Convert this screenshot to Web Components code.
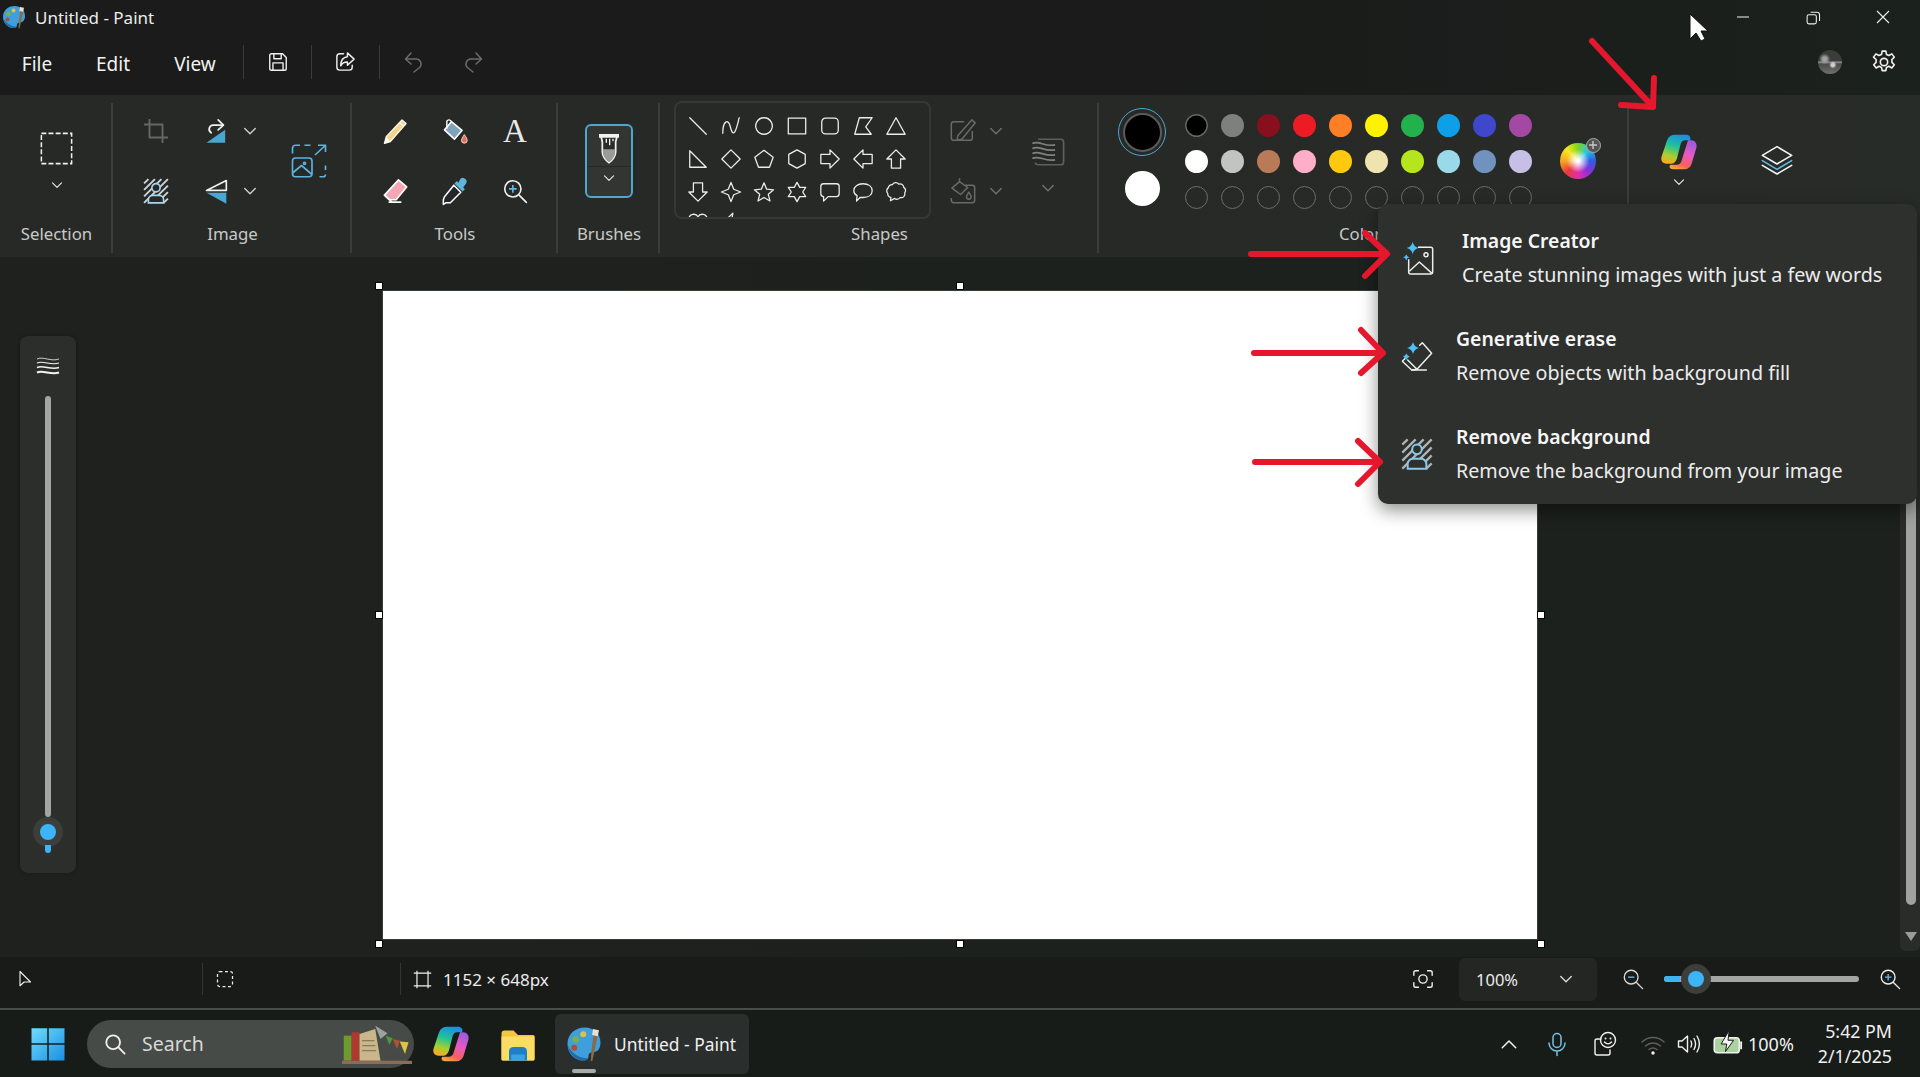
<!DOCTYPE html>
<html lang="en">
<head>
<meta charset="utf-8">
<title>Untitled - Paint</title>
<style>
  html, body { margin: 0; background: #1c211d; }
  body { width: 1920px; height: 1077px; overflow: hidden; font-family: "Noto Sans", "Open Sans", sans-serif; color: #f2f2f2; }
</style>
</head>
<body>
<paint-app></paint-app>

<script>
// icon bodies, all drawn in a 24x24 box
const W = 'fill="none" stroke="#f0f0f0" stroke-width="1.5" stroke-linejoin="round" stroke-linecap="round"';
const DIM = 'fill="none" stroke="#696969" stroke-width="1.3" stroke-linejoin="round"';
const SPARK = (x, y, r) => `<path d="M${x} ${y - r}Q${x + r * .2} ${y - r * .2} ${x + r} ${y}Q${x + r * .2} ${y + r * .2} ${x} ${y + r}Q${x - r * .2} ${y + r * .2} ${x - r} ${y}Q${x - r * .2} ${y - r * .2} ${x} ${y - r}Z" fill="#4fc0f5"/>`;
const HATCH = 'M1 5 5 1M1 11 11 1M1 17 17 1M1 23 23 1M7 23 23 7M13 23 23 13M19 23 23 19';

const ICONS = {
  save: `<g ${W}><path d="M5 3h12l4 4v12a2 2 0 0 1-2 2H5a2 2 0 0 1-2-2V5a2 2 0 0 1 2-2z"/><path d="M7.5 3v5.5h8V3M6.5 21v-8h11v8"/></g>`,
  share: `<g ${W}><path d="M10 4H6a3 3 0 0 0-3 3v11a3 3 0 0 0 3 3h10a3 3 0 0 0 3-3v-2"/><path d="M14 3l7 6.5-7 6.5v-3.5c-3.5 0-5.5 1-7 4 0-5 2-9 7-9.5z"/></g>`,
  undo: `<g fill="none" stroke="#6c6c6c" stroke-width="1.5" stroke-linecap="round" stroke-linejoin="round"><path d="M4 9h10a5 5 0 0 1 3 9l-5 4"/><path d="M9 3L3.5 9 9 14"/></g>`,
  redo: `<g fill="none" stroke="#6c6c6c" stroke-width="1.5" stroke-linecap="round" stroke-linejoin="round"><path d="M20 9H10a5 5 0 0 0-3 9l5 4"/><path d="M15 3l5.5 6L15 14"/></g>`,
  minimize: `<path d="M4 12h16" stroke="#eee" stroke-width="1.4"/>`,
  restore: `<g fill="none" stroke="#eee" stroke-width="1.5"><rect x="3" y="8" width="13" height="13" rx="2.5"/><path d="M8 4.5h9a3.5 3.5 0 0 1 3.5 3.5v9"/></g>`,
  close: `<path d="M4 4l16 16M20 4L4 20" stroke="#eee" stroke-width="1.5"/>`,
  gear: `<g ${W}><circle cx="12" cy="12" r="3.4"/><path d="M10.3 2h3.4l.6 3 2.2 1 2.7-1.5 2.3 3-2.2 2.2v2.6l2.2 2.2-2.3 3-2.7-1.5-2.2 1-.6 3h-3.4l-.6-3-2.2-1-2.7 1.5-2.3-3 2.2-2.2v-2.6L2.3 7.5l2.3-3L7.3 6l2.4-1z"/></g>`,
  marquee: `<rect x="1" y="1" width="22" height="22" fill="none" stroke="#f0f0f0" stroke-width="1.1" stroke-dasharray="3.6 1.6"/>`,
  crop: `<g fill="none" stroke="#666" stroke-width="1.7"><path d="M6 1v17h17"/><path d="M1 6h17v17"/></g>`,
  rotate: `<path d="M19 22H3L19 11z" fill="#4aa7d2"/><g fill="none" stroke="#f0f0f0" stroke-width="1.5" stroke-linecap="round" stroke-linejoin="round"><path d="M17 7H9a3.5 3.5 0 0 0-2 6.5"/><path d="M13 2.5L17.5 7 13 11"/></g>`,
  flip: `<path d="M20 3v8.5H3z" fill="none" stroke="#f0f0f0" stroke-width="1.4" stroke-linejoin="round"/><path d="M20 13.5V23L3 13.5z" fill="#4aa7d2"/>`,
  removebg: `<path d="${HATCH}" stroke="#c9d3d8" stroke-width="1.8"/><circle cx="12" cy="9" r="3.8" fill="#272927" stroke="#a6d6ee" stroke-width="1.5"/><path d="M5 23v-3a4 4 0 0 1 4-4h6a4 4 0 0 1 4 4v3z" fill="#272927" stroke="#a6d6ee" stroke-width="1.5"/>`,
  resize: `<g fill="none" stroke="#5cb3de" stroke-width="1.1" stroke-linejoin="round"><path d="M1 7V3.5A2 2 0 0 1 3 1.5h3M9 1.5h4M23 15v3M23 21a1.5 1.5 0 0 1-1.5 1.5H19"/><rect x="1" y="10" width="13" height="12.5" rx="2"/><path d="M1 20l6-5 7 6"/><circle cx="9" cy="13.5" r=".7"/><path d="M16 8l7-6.5M18 1.5h5V6"/></g>`,
  pencil: `<path d="M18 2.5l3.5 3L8 21l-5 1.5L4.5 17z" fill="#f4d486" stroke="#fbf6e8" stroke-width="1.2" stroke-linejoin="round"/><path d="M16 5l3.5 3" stroke="#fff" stroke-width="1.2"/><path d="M4.5 17L8 21l-5 1.5z" fill="#fff"/>`,
  bucket: `<path d="M9 4l9 7.5-6.5 7.5L3 11z" fill="#7fa3b8" stroke="#fff" stroke-width="1.4" stroke-linejoin="round"/><path d="M9 4C8 2 6 2 5 3.5V10" fill="none" stroke="#fff" stroke-width="1.2"/><path d="M20 15c2 3 2.5 4 2.5 5a2.5 2.5 0 0 1-5 0c0-1 .5-2 2.5-5z" fill="#e8705f" stroke="#fff" stroke-width=".6"/>`,
  eraser: `<path d="M15 2.5l7 6-9 11H7l-4-4z" fill="#f3a6b4" stroke="#fff" stroke-width="1.4" stroke-linejoin="round"/><path d="M3 15.5l6 5.5M7 21.5h10" stroke="#fff" stroke-width="1.4" fill="none" stroke-linecap="round"/>`,
  dropper: `<path d="M16 2.5a3 3 0 0 1 5.5 3L19 9l1.5 1.5-2 2-7-7 2-2L15 5z" fill="#5fb4dd"/><path d="M11 7l6 6-9 9H4.5L2 23.5v-4L3 17z" fill="#22262a" stroke="#fff" stroke-width="1.3" stroke-linejoin="round"/>`,
  zoomplus: `<circle cx="10" cy="10" r="7.5" fill="none" stroke="#f0f0f0" stroke-width="1.5"/><path d="M16 16l6.5 6.5" stroke="#f0f0f0" stroke-width="1.5" stroke-linecap="round"/><path d="M10 6.5v7M6.5 10h7" stroke="#62b8e4" stroke-width="1.5"/>`,
  zoomminus: `<circle cx="10" cy="10" r="7.5" fill="none" stroke="#d8d8d8" stroke-width="1.5"/><path d="M16 16l6.5 6.5" stroke="#d8d8d8" stroke-width="1.5" stroke-linecap="round"/><path d="M6.5 10h7" stroke="#62b8e4" stroke-width="1.5"/>`,
  brush: `<path d="M6 3h12l-1 4.5V15c0 3-2.5 6.5-5 8-2.5-1.5-5-5-5-8V7.5z" fill="#2a2c2a" stroke="#f2f2f2" stroke-width="1.3" stroke-linejoin="round"/><path d="M7.4 13h9.2v2c0 3-2.3 6-4.6 7.5-2.3-1.5-4.6-4.5-4.6-7.5z" fill="#9b9b9b"/><path d="M4.5 1.5h15v2.8h-15z" fill="#f2f2f2"/><path d="M10 5v3M12.5 5v5M15 5v2" stroke="#f2f2f2" stroke-width="1"/>`,
  outline: `<g ${DIM}><path d="M13 4H4a2 2 0 0 0-2 2v12a2 2 0 0 0 2 2h14a2 2 0 0 0 2-2v-6"/><path d="M19.5 2.5l3 2.5L11 19l-4 1 .5-4z"/></g>`,
  shapefill: `<g ${DIM}><path d="M14 7h6a2 2 0 0 1 2 2v11a2 2 0 0 1-2 2H4a2 2 0 0 1-2-2v-2"/><path d="M9 4l7 5-6 6-7.5-5.5zM9 4V1"/><path d="M17 13c1.5 2.5 2 3 2 4a2 2 0 0 1-4 0c0-1 .5-1.5 2-4z"/></g>`,
  sizes: `<g fill="none" stroke="#5e5e5e" stroke-width="1.2"><path d="M5 3h16a2 2 0 0 1 2 2v14a2 2 0 0 1-2 2H5a2 2 0 0 1-2-1.5"/><path d="M1 6c5-2.5 8 2.5 16 1M1 9.5c5-2.5 8 2.5 16 1M1 13c5-2.5 8 2.5 16 1M1 16.5c5-2.5 8 2.5 16 1" stroke="#808080"/></g>`,
  waves: `<g fill="none" stroke="#f2f2f2"><path d="M1 4c6-3 14 3 22 0" stroke-width=".8"/><path d="M1 8c6-3 14 3 22 0" stroke-width="1.1"/><path d="M1 12.5c6-3 14 3 22 0" stroke-width="1.5"/><path d="M1 17.5c6-3 14 3 22 0" stroke-width="2"/></g>`,
  layers: `<g fill="none" stroke-width="1.2" stroke-linejoin="round" stroke-linecap="round"><path d="M12 2l11 6.5L12 15 1 8.5z" stroke="#f4f4f4"/><path d="M1 12.5L12 19l11-6.5" stroke="#62b8e4"/><path d="M1 16L12 22.5 23 16" stroke="#f4f4f4"/></g>`,
  imgcreator: `<g fill="none" stroke="#eee" stroke-width="1.1" stroke-linejoin="round"><path d="M12 4h9.5A1.5 1.5 0 0 1 23 5.5v17a1.5 1.5 0 0 1-1.5 1.5h-15A1.5 1.5 0 0 1 5 22.5V13"/><path d="M5.5 22l7.5-7 9.5 8.5"/><circle cx="18" cy="9.5" r="1.5"/></g>${SPARK(8, 4.5, 4.5)}${SPARK(3.2, 11.5, 2.3)}`,
  generase: `<g fill="none" stroke="#eee" stroke-width="1.1" stroke-linejoin="round" stroke-linecap="round"><path d="M14 4l2-2 7 8-11 12-4 .5-7-6.5 3-3"/><path d="M8 22.5h11M5 15l7 7"/></g>${SPARK(9, 6, 4.5)}${SPARK(4, 12.5, 2.5)}`,
  removebgmenu: `<path d="${HATCH}" stroke="#aab4b9" stroke-width="1.7"/><circle cx="12" cy="8.5" r="3.6" fill="#2e302e" stroke="#8cc8e6" stroke-width="1.5"/><path d="M5 23v-3.5a4 4 0 0 1 4-4h6a4 4 0 0 1 4 4V23z" fill="#2e302e" stroke="#8cc8e6" stroke-width="1.5"/>`,
  pointer: `<path d="M4 2v19l5.5-5h8.5z" fill="none" stroke="#f0f0f0" stroke-width="1.5" stroke-linejoin="round"/>`,
  selecticon: `<rect x="3" y="3" width="18" height="18" rx="2.5" fill="none" stroke="#f0f0f0" stroke-width="1.5" stroke-dasharray="3.5 3"/>`,
  canvasicon: `<g fill="none" stroke="#f0f0f0" stroke-width="1.5"><path d="M5 1v22M19 1v22M1 4h22M1 20h22"/></g>`,
  focus: `<g fill="none" stroke="#f0f0f0" stroke-width="1.5" stroke-linecap="round"><path d="M2 8V5a2 2 0 0 1 2-2h3M17 3h3a2 2 0 0 1 2 2v3M22 16v3a2 2 0 0 1-2 2h-3M7 21H4a2 2 0 0 1-2-2v-3"/><circle cx="12" cy="12" r="4.5"/></g>`,
  search: `<circle cx="10" cy="10" r="7.5" fill="none" stroke="#f0f0f0" stroke-width="2"/><path d="M15.5 15.5l7 7" stroke="#f0f0f0" stroke-width="2" stroke-linecap="round"/>`,
  chevup: `<path d="M3 17L12 8l9 9" fill="none" stroke="#f4f4f4" stroke-width="2" stroke-linecap="round" stroke-linejoin="round"/>`,
  mic: `<g fill="none" stroke="#72c3e6" stroke-width="1.5" stroke-linecap="round"><rect x="8" y="1.5" width="8" height="14" rx="4"/><path d="M4 11a8 8 0 0 0 16 0M12 19v4.5"/></g>`,
  feedback: `<g fill="none" stroke="#f0f0f0" stroke-width="1.4" stroke-linecap="round" stroke-linejoin="round"><path d="M8 7H4a2 2 0 0 0-2 2v12a2 2 0 0 0 2 2h11a2 2 0 0 0 2-2v-3"/><circle cx="15" cy="8" r="7.5"/><path d="M11.5 10c2 2.5 5 2.5 7 0"/></g><circle cx="12.5" cy="6.5" r="1" fill="#f0f0f0"/><circle cx="17.5" cy="6.5" r="1" fill="#f0f0f0"/>`,
  wifi: `<g fill="none" stroke="#5e5e5e" stroke-width="1.5" stroke-linecap="round"><path d="M1 10c6-6 16-6 22 0M4.5 14c4.5-4 10.5-4 15 0M8 17.5c2.5-2 5.5-2 8 0"/></g><circle cx="12" cy="21" r="1.7" fill="#f0f0f0"/>`,
  volume: `<g fill="none" stroke="#f0f0f0" stroke-width="1.4" stroke-linecap="round" stroke-linejoin="round"><path d="M1.5 9v6h3.5l5.5 5V4L5 9z"/><path d="M14 9c1 2 1 4 0 6M17 6.5c2 3.5 2 7.5 0 11M20 4c3 5 3 11 0 16"/></g>`,
  battery: `<rect x="1" y="7" width="20" height="12" rx="2.5" fill="#a9d39d" stroke="#f0f0f0" stroke-width="1.3"/><path d="M22.5 10.5v5" stroke="#f0f0f0" stroke-width="1.5" stroke-linecap="round"/><path d="M13 1L6.5 12H11l-1 6 6.5-9H12z" fill="#f4f4f4" stroke="#1a1c1a" stroke-width=".8"/>`,
  folder: `<path d="M1 5a2 2 0 0 1 2-2h6l3 3h10a2 2 0 0 1 1 .5V22a1 1 0 0 1-1 1H2a1 1 0 0 1-1-1z" fill="#f2c641"/><path d="M1 7h22v15a1 1 0 0 1-1 1H2a1 1 0 0 1-1-1z" fill="#fbdc64"/><path d="M6 23v-6a3 3 0 0 1 3-3h6a3 3 0 0 1 3 3v6z" fill="#1d7fc8"/><path d="M7.5 19h9v4h-9z" fill="#3aa3e6"/>`,
  start: `<defs><linearGradient id="st" x1="0" y1="0" x2="1" y2="1"><stop offset="0" stop-color="#6fdcff"/><stop offset="1" stop-color="#1a8fe0"/></linearGradient></defs><path d="M1 1.5h10.5v10H1zM12.5 1.5H23v10H12.5zM1 12.5h10.5V23H1zM12.5 12.5H23V23H12.5z" fill="url(#st)"/>`,
  copilot: `<defs><linearGradient id="cpa" x1="0.6" y1="0" x2="0.3" y2="1"><stop offset="0" stop-color="#1c8fe0"/><stop offset=".4" stop-color="#20c29a"/><stop offset=".75" stop-color="#a8d02c"/><stop offset="1" stop-color="#f7a82a"/></linearGradient><linearGradient id="cpb" x1="0.7" y1="0" x2="0.3" y2="1"><stop offset="0" stop-color="#a05ae0"/><stop offset=".45" stop-color="#e85ac0"/><stop offset=".8" stop-color="#f4605a"/><stop offset="1" stop-color="#f9a03a"/></linearGradient></defs><path d="M18 4.2H20c2.7 0 4.3 2.3 3.6 5L20.5 19.5c-.8 2.7-2.6 4-5.2 4H8c-2.3 0-3-2-1.5-3h4c1.6 0 2.6-1 3.1-2.4z" fill="url(#cpb)"/><path d="M9.5 .5h7c2.5 0 3.6 1.6 3 3.7H16c-1.4 0-2.3.8-2.8 2.2L10.7 16c-.5 1.7-1.6 3.8-3.7 3.8H3.7C1 19.8-.4 17.5.4 15L4 4.3C4.8 1.8 6.8 .5 9.5 .5z" fill="url(#cpa)"/>`,
  palette: `<path d="M12.5 1C19 1 23 5.5 23 11c0 4-2 6.5-5 6.5-2.2 0-3 1-3 2.5 0 1.7-1 3-3.5 3C5.5 23 1 18 1 12 1 5.5 6 1 12.5 1z" fill="#3f9fdc"/><path d="M1.2 13C2 18.5 6 23 11.5 23c1.5 0 2.5-.5 3-1.5C9 21.5 4 18.5 1.2 13z" fill="#1e6ca8"/><circle cx="6.5" cy="9" r="2.2" fill="#7bb240"/><circle cx="5.5" cy="14.5" r="2" fill="#a8503c"/><circle cx="11.5" cy="5.5" r="2" fill="#e2c044"/><path d="M18.5 4.5l2.8.6L19.2 16l-1.7 7.5-1-.2L17 15.8z" fill="#8a6a46"/><path d="M18 2l4 .8-.8 4-3.8-.8z" fill="#e8e0d0"/>`,
  books: `<rect x="1" y="7" width="4.5" height="15" fill="#6f9a2e"/><rect x="5.5" y="5" width="4.5" height="17" fill="#b0392f"/><path d="M10 6l9-3 3 19H10z" fill="#c9b68a"/><path d="M11.5 10h7M11.5 13h7.5M11.5 16h8" stroke="#8a7a5a" stroke-width=".8"/><path d="M0 22h40v2H0z" fill="#8c6c58"/><path d="M19 1l7 4.5-4 3.5z" fill="#9aa39c"/><path d="M25 7l4 1.5-2 4z" fill="#4d9a3a"/><path d="M29 9l4 1-1.5 5z" fill="#b0542f"/><path d="M33 10.5l5 .5-2 7z" fill="#e0c23c"/>`,
};

const icon = (name, size, box = '0 0 24 24') =>
  `<svg width="${size}" height="${size}" viewBox="${box}" style="display:block;overflow:visible">${ICONS[name]}</svg>`;
const chevron = (c = '#e4e4e4', s = 12) =>
  `<svg width="${s}" height="${s}" viewBox="0 0 12 12" style="display:block"><path d="M1.5 3.8L6 8.3l4.5-4.5" fill="none" stroke="${c}" stroke-width="1.2" stroke-linecap="round" stroke-linejoin="round"/></svg>`;

class IconCell extends HTMLElement {
  constructor() {
    super();
    const shadow = this.attachShadow({ mode: 'open' });
    const size = this.getAttribute('size') || 24;
    shadow.innerHTML = `
      <style>:host { display: flex; align-items: center; justify-content: center; }</style>
      ${icon(this.getAttribute('name'), size)}`;
  }
}

class TitleBar extends HTMLElement {
  constructor() {
    super();
    this.attachShadow({ mode: 'open' }).innerHTML = `
      <style>
        :host { display: flex; align-items: center; height: 34px; padding-left: 2px; }
        span { margin-left: 9px; font-size: 17px; color: #ececec; }
        .ctl { margin-left: auto; display: flex; padding-right: 2px; }
        .ctl icon-cell { width: 70px; }
      </style>
      <icon-cell name="palette" size="24"></icon-cell>
      <span>Untitled - Paint</span>
      <div class="ctl">
        <icon-cell name="minimize" size="18"></icon-cell>
        <icon-cell name="restore" size="17"></icon-cell>
        <icon-cell name="close" size="18"></icon-cell>
      </div>`;
  }
}

class MenuBar extends HTMLElement {
  constructor() {
    super();
    this.attachShadow({ mode: 'open' }).innerHTML = `
      <style>
        :host { display: flex; align-items: center; height: 61px; padding-left: 11px; }
        .m { font-size: 19px; text-align: center; color: #f2f2f2; padding-bottom: 1px; }
        i { width: 1px; height: 34px; background: #3a3c3a; margin-bottom: 6px; }
        icon-cell { height: 40px; margin-bottom: 6px; }
        .right { margin-left: auto; display: flex; gap: 6px; padding-right: 12px; align-items: center; }
        .right icon-cell { width: 48px; }
        .slot { width: 48px; height: 40px; margin-bottom: 6px; display: flex; align-items: center; justify-content: center; }
        .avatar { width: 24px; height: 24px; border-radius: 50%; background:
          radial-gradient(circle at 62% 62%, #d0d0d0 0 7%, transparent 18%),
          radial-gradient(circle at 28% 38%, #a0a0a0 0 9%, transparent 24%),
          linear-gradient(#3c3c3c 0 46%, #999 50%, #4a4a4a 58%, #707070); }
      </style>
      <div class="m" style="width:52px">File</div>
      <div class="m" style="width:100px">Edit</div>
      <div class="m" style="width:64px">View</div>
      <i style="margin-left:16px"></i>
      <icon-cell name="save" size="22" style="width:67px"></icon-cell><i></i>
      <icon-cell name="share" size="23" style="width:67px"></icon-cell><i></i>
      <icon-cell name="undo" size="24" style="width:68px"></icon-cell>
      <icon-cell name="redo" size="24" style="width:50px"></icon-cell>
      <div class="right">
        <div class="slot"><div class="avatar"></div></div>
        <icon-cell name="gear" size="26"></icon-cell>
      </div>`;
  }
}

class RibbonGroup extends HTMLElement {
  constructor() {
    super();
    const hide = this.hasAttribute('nodivider');
    this.attachShadow({ mode: 'open' }).innerHTML = `
      <style>
        :host { display: grid; grid-template-rows: 121px 24px; position: relative; padding-top: 6px; box-sizing: border-box; height: 162px; }
        :host::after { content: ''; position: absolute; right: 0; top: 8px; bottom: 4px; width: 2px; background: ${hide ? 'transparent' : '#3a3d3a'}; }
        .label { font-size: 16.8px; line-height: 24px; text-align: center; color: #c9c9c9; }
      </style>
      <div><slot></slot></div>
      <div class="label">${this.getAttribute('label') || ''}</div>`;
  }
}

const SHAPES = [
  'M3 3 21 21', 'M3 20C3 6 9 4 11 12S15 23 18 14 20 5 21 3', 'M12 3a9 9 0 1 0 .01 0Z',
  'M2.5 3.5h19v17h-19Z', 'M7 3.5h10a4 4 0 0 1 4 4v9a4 4 0 0 1-4 4H7a4 4 0 0 1-4-4v-9a4 4 0 0 1 4-4Z',
  'M8 3H22L15 13 21 21H3Z', 'M12 3 22 21H2Z',
  'M3 3V21H21Z', 'M12 2 22 12 12 22 2 12Z', 'M12 2.5 22 10 18 21H6L2 10Z', 'M12 2 21 7V17L12 22 3 17V7Z',
  'M2 7H12V2L22 12 12 22V17H2Z', 'M22 7H12V2L2 12 12 22V17H22Z', 'M7 22V12H2L12 2 22 12H17V22Z',
  'M7 2V12H2L12 22 22 12H17V2Z', 'M12 1.5 15 9 22.5 12 15 15 12 22.5 9 15 1.5 12 9 9Z',
  'M12 2 14.9 8.9 22.5 9.6 16.7 14.5 18.5 21.8 12 18 5.5 21.8 7.3 14.5 1.5 9.6 9.1 8.9Z',
  'M12 1.5 15 7H21.5L18.2 12 21.5 17H15L12 22.5 9 17H2.5L5.8 12 2.5 7H9Z',
  'M5 3H19a3 3 0 0 1 3 3V14a3 3 0 0 1-3 3H10L5 22V17a3 3 0 0 1-3-3V6a3 3 0 0 1 3-3Z',
  'M12 3C18 3 22 6 22 10.5 22 15 18 18 12 18 11 18 10 18 9 17.8L5 22 5.5 16C3 14.5 2 12.5 2 10.5 2 6 6 3 12 3Z',
  'M8 4a4 4 0 0 1 7-.5 4 4 0 0 1 5.5 3.5 4 4 0 0 1 1 6 4 4 0 0 1-5 5 4 4 0 0 1-6 1L6 21.5 6.5 18A4 4 0 0 1 3 13.5 4 4 0 0 1 3.5 7.5 4 4 0 0 1 8 4Z',
  'M2 6C2 -1 10 -1 12 3 14 -1 22 -1 22 6 22 12 14 16 12 20 10 16 2 12 2 6Z', 'M14 -1 5 8 10 11 6 20 20 8 13 6Z',
];

class ShapeGallery extends HTMLElement {
  constructor() {
    super();
    const cells = SHAPES.map(d => `<svg width="22" height="22" viewBox="0 0 24 24" style="overflow:visible"><path d="${d}" fill="none" stroke="#ececec" stroke-width="1.4" stroke-linejoin="round" stroke-linecap="round"/></svg>`).join('');
    this.attachShadow({ mode: 'open' }).innerHTML = `
      <style>
        :host { display: block; box-sizing: border-box; width: 257px; height: 118px; overflow: hidden; border: 2px solid #363836; border-radius: 8px; padding: 6px 0 0 5px; }
        div { display: grid; grid-template-columns: repeat(7, 33px); grid-auto-rows: 33px; place-items: center; }
      </style>
      <div>${cells}</div>`;
  }
}

const PALETTE = ['#000000', '#7f7f7f', '#880f1e', '#ed1c24', '#ff7f27', '#fff200', '#22b14c', '#0f9fe8', '#3f48cc', '#a349a4',
  '#ffffff', '#c3c3c3', '#b97a57', '#ffaec9', '#ffc90e', '#efe4b0', '#b5e61d', '#99d9ea', '#7092be', '#c8bfe7'];

class ColorPicker extends HTMLElement {
  constructor() {
    super();
    const dots = PALETTE.map((c, i) => `<b style="background:${c};${i === 0 ? 'box-shadow:0 0 0 1.5px #666 inset' : ''}"></b>`).join('')
      + '<b class="empty"></b>'.repeat(10);
    this.attachShadow({ mode: 'open' }).innerHTML = `
      <style>
        :host { display: flex; padding: 6px 0 0 19px; }
        .big { width: 48px; display: flex; flex-direction: column; align-items: center; padding-top: 1px; }
        .ring { box-sizing: border-box; width: 48px; height: 48px; border-radius: 50%; border: 1.5px solid #4fa6d0; display: flex; align-items: center; justify-content: center; }
        .ring u { display: block; box-sizing: border-box; width: 39px; height: 39px; border-radius: 50%; background: #000; border: 2.5px solid #5b5b5b; }
        .white { margin-top: 15px; width: 35px; height: 35px; border-radius: 50%; background: #fff; }
        .grid { display: grid; grid-template-columns: repeat(10, 36px); grid-auto-rows: 36px; place-items: center; margin-left: 12px; height: 108px; }
        b { display: block; box-sizing: border-box; width: 23px; height: 23px; border-radius: 50%; }
        .empty { border: 1.5px solid #6c6c6c; }
        .wheel { position: relative; width: 36px; height: 36px; margin: 36px 0 0 22px; border-radius: 50%;
          background: radial-gradient(circle at 50% 50%, #fff 0 5%, rgba(255,255,255,0) 45%),
            conic-gradient(#7ed321, #25c5e8, #2f5be0, #8b2fd8, #e02fa8, #e83a3a, #f5a623, #f8e71c, #7ed321); }
        .plus { position: absolute; right: -5px; top: -5px; width: 15px; height: 15px; box-sizing: border-box; border-radius: 50%; background: #555; border: 1.5px solid #aaa; }
        .plus svg { display: block; }
      </style>
      <div class="big"><div class="ring"><u></u></div><div class="white"></div></div>
      <div class="grid">${dots}</div>
      <div class="wheel"><div class="plus"><svg width="12" height="12" viewBox="0 0 12 12"><path d="M6 2v8M2 6h8" stroke="#c8c8c8" stroke-width="1.4"/></svg></div></div>`;
  }
}

class PaintRibbon extends HTMLElement {
  constructor() {
    super();
    this.attachShadow({ mode: 'open' }).innerHTML = `
      <style>
        :host { display: grid; grid-template-columns: 113px 239px 206px 102px 439px 530px 99px 99px; height: 162px; background: linear-gradient(90deg, #272927, #272927 60%, #282c28); }
        .sel { display: flex; flex-direction: column; align-items: center; padding-top: 31px; gap: 14px; }
        .img { display: grid; grid-template-columns: 28px 56px 36px; grid-auto-rows: 60px; column-gap: 32px; padding-left: 30px; align-items: center; }
        .split { display: flex; align-items: center; gap: 12px; }
        .tools { display: grid; grid-template-columns: repeat(3, 60px); grid-auto-rows: 60px; padding-left: 13px; }
        .tools > * { display: flex; align-items: center; justify-content: center; }
        .a { font: 33px "Liberation Serif", serif; color: #e8e8e8; }
        .brush { box-sizing: border-box; width: 48px; height: 74px; margin: 23px 0 0 27px; border: 2px solid #4fa6d0; border-radius: 6px; background: #333533; display: flex; flex-direction: column; align-items: center; padding-top: 6px; }
        .brush div { margin-top: 2px; align-self: stretch; display: flex; justify-content: center; padding-top: 5px; border-top: 1px solid #272927; }
        .shapes { display: flex; padding-left: 14px; }
        .opts { display: grid; grid-template-columns: 28px 16px 34px; grid-auto-rows: 60px; column-gap: 12px; margin-left: 18px; align-items: center; }
        .size { grid-column: 3; grid-row: 1 / 3; align-self: start; margin-left: 27px; display: flex; flex-direction: column; align-items: center; gap: 12px; padding-top: 34px; }
        .center { display: flex; flex-direction: column; align-items: center; }
        .copilot { padding-top: 33px; gap: 6px; }
        .layers { padding-top: 43px; padding-right: 2px; }
      </style>
      <ribbon-group label="Selection"><div class="sel">${icon('marquee', 33)}${chevron()}</div></ribbon-group>
      <ribbon-group label="Image">
        <div class="img">
          ${icon('crop', 26)}
          <div class="split">${icon('rotate', 28)}${chevron('#cfcfcf', 14)}</div>
          <div style="grid-row:1/3;grid-column:3">${icon('resize', 36)}</div>
          ${icon('removebg', 26)}
          <div class="split">${icon('flip', 28)}${chevron('#cfcfcf', 14)}</div>
        </div>
      </ribbon-group>
      <ribbon-group label="Tools">
        <div class="tools">
          <div>${icon('pencil', 28)}</div><div>${icon('bucket', 28)}</div><div><span class="a">A</span></div>
          <div>${icon('eraser', 28)}</div><div>${icon('dropper', 28)}</div><div>${icon('zoomplus', 26)}</div>
        </div>
      </ribbon-group>
      <ribbon-group label="Brushes"><div class="brush">${icon('brush', 32)}<div>${chevron()}</div></div></ribbon-group>
      <ribbon-group label="Shapes">
        <div class="shapes">
          <shape-gallery></shape-gallery>
          <div class="opts">
            ${icon('outline', 28)}${chevron('#707070', 14)}
            <div class="size">${icon('sizes', 34)}${chevron('#707070', 14)}</div>
            ${icon('shapefill', 28)}${chevron('#707070', 14)}
          </div>
        </div>
      </ribbon-group>
      <ribbon-group label="Colors"><color-picker></color-picker></ribbon-group>
      <ribbon-group nodivider><div class="center copilot">${icon('copilot', 36)}${chevron()}</div></ribbon-group>
      <ribbon-group nodivider><div class="center layers">${icon('layers', 32)}</div></ribbon-group>`;
  }
}

class SizeSlider extends HTMLElement {
  constructor() {
    super();
    this.attachShadow({ mode: 'open' }).innerHTML = `
      <style>
        :host { display: flex; flex-direction: column; align-items: center; box-sizing: border-box; width: 56px; height: 537px; margin: 79px 0 0 20px; padding-top: 19px; background: #2c2e2c; border-radius: 8px; flex: none; box-shadow: 0 0 4px rgba(0,0,0,.3); }
        .track { width: 6px; height: 421px; margin-top: 17px; background: #a2a5a2; border-radius: 3px; }
        .knob { width: 30px; height: 30px; border-radius: 50%; background: #3c3e3c; display: flex; align-items: center; justify-content: center; position: relative; }
        .knob b { width: 16px; height: 16px; border-radius: 50%; background: #3db4f6; }
        .tail { width: 6px; height: 8px; margin-top: -2px; background: #3db4f6; border-radius: 0 0 3px 3px; position: relative; }
      </style>
      ${icon('waves', 24)}
      <div class="track"></div>
      <div class="knob"><b></b></div>
      <div class="tail"></div>`;
  }
}

class CanvasStage extends HTMLElement {
  constructor() {
    super();
    // resize handles sit just outside the paper edge
    const spots = [[0, 0, -1], [50, 0, 0], [100, 0, 1], [0, 50, -1], [100, 50, 1], [0, 100, -1], [50, 100, 0], [100, 100, 1]];
    const handles = spots.map(([x, y, d]) => {
      const dy = y === 50 ? 0 : y === 0 ? -5 : 5;
      return `<b style="left:calc(${x}% + ${d * 4 - 4.5}px);top:calc(${y}% + ${dy - 4.5}px)"></b>`;
    }).join('');
    this.attachShadow({ mode: 'open' }).innerHTML = `
      <style>
        :host { display: flex; height: 700px; background: linear-gradient(90deg, #1f211f, #1c211d 75%); }
        .paper { position: relative; flex: none; width: 1154px; height: 648px; margin: 34px 0 0 307px; background: #fff; box-shadow: 0 0 0 1px #3a3c3a; }
        b { position: absolute; box-sizing: content-box; width: 6px; height: 6px; background: #fff; border: 1.5px solid #000; }
        .bar { margin-left: auto; width: 20px; flex: none; height: 694px; border-radius: 0 0 6px 6px; background: #2a2c2a; display: flex; flex-direction: column; align-items: center; }
        .thumb { width: 10px; margin-top: 20px; height: 628px; background: #9fa3a0; border-radius: 5px; margin-left: 2px; }
        .tri { margin-top: 27px; margin-left: 2px; width: 0; height: 0; border: 6px solid transparent; border-top: 9px solid #9a9a9a; border-bottom: 0; }
      </style>
      <size-slider></size-slider>
      <div class="paper">${handles}</div>
      <div class="bar"><div class="thumb"></div><div class="tri"></div></div>`;
  }
}

class StatusBar extends HTMLElement {
  constructor() {
    super();
    this.attachShadow({ mode: 'open' }).innerHTML = `
      <style>
        :host { display: flex; align-items: center; box-sizing: border-box; height: 53px; padding-bottom: 7px; border-bottom: 2px solid #4a4c4a; background: #191b19; font-size: 17px; color: #ececec; }
        i { width: 1px; height: 32px; background: #333533; flex: none; }
        icon-cell { flex: none; }
        .right { margin-left: auto; display: flex; align-items: center; padding-right: 14px; }
        .combo { box-sizing: border-box; width: 138px; height: 43px; margin-left: 16px; padding: 0 24px 0 17px; display: flex; align-items: center; justify-content: space-between; background: #242624; border-radius: 6px; font-size: 16.5px; }
        .slider { position: relative; width: 195px; height: 6px; margin: 0 15px; border-radius: 3px; background: #a2a5a2; }
        .slider u { position: absolute; left: 0; top: 0; width: 16px; height: 6px; background: #3db4f6; border-radius: 3px 0 0 3px; }
        .slider div { position: absolute; left: 17px; top: -12px; width: 30px; height: 30px; border-radius: 50%; background: #3c3e3c; display: flex; align-items: center; justify-content: center; }
        .slider b { width: 16px; height: 16px; border-radius: 50%; background: #3db4f6; }
      </style>
      <icon-cell name="pointer" size="18" style="width:52px"></icon-cell>
      <i style="margin-left:150px"></i>
      <icon-cell name="selecticon" size="20" style="width:44px"></icon-cell>
      <i style="margin-left:153px"></i>
      <icon-cell name="canvasicon" size="19" style="width:42px"></icon-cell>
      <span>1152 × 648px</span>
      <div class="right">
        <icon-cell name="focus" size="22" style="width:40px"></icon-cell>
        <div class="combo"><span>100%</span>${chevron('#d8d8d8', 14)}</div>
        <icon-cell name="zoomminus" size="22" style="width:32px;margin-left:20px"></icon-cell>
        <div class="slider"><u></u><div><b></b></div></div>
        <icon-cell name="zoomplus" size="22" style="width:32px"></icon-cell>
      </div>`;
  }
}

class TaskBar extends HTMLElement {
  constructor() {
    super();
    this.attachShadow({ mode: 'open' }).innerHTML = `
      <style>
        :host { display: flex; align-items: center; height: 67px; padding-left: 30px; background: #171c19; color: #f0f0f0; font-size: 18px; }
        .search { box-sizing: border-box; width: 327px; height: 48px; margin-left: 21px; padding-left: 17px; display: flex; align-items: center; background: #474b48; border-radius: 24px; color: #d8d8d8; }
        .search span { margin-left: 16px; font-size: 19.5px; }
        .search svg:last-child { margin-left: auto; margin-right: 2px; }
        .app { box-sizing: border-box; width: 194px; height: 60px; margin-left: 19px; padding-left: 11px; display: flex; align-items: center; position: relative; background: #2a2e2c; border-radius: 6px; }
        .app span { margin-left: 12px; font-size: 17.4px; }
        .app i { position: absolute; left: 17px; bottom: 1px; width: 24px; height: 4px; border-radius: 2px; background: #a9aba9; }
        .tray { margin-left: auto; box-sizing: border-box; width: 407px; margin-right: 28px; display: flex; align-items: center; }
        .tray icon-cell { flex: none; }
        .clock { margin-left: auto; text-align: right; font-size: 17.8px; line-height: 24.5px; }
      </style>
      <icon-cell name="start" size="36"></icon-cell>
      <div class="search">${icon('search', 22)}<span>Search</span><svg width="70" height="40" viewBox="0 0 40 24" preserveAspectRatio="none" style="display:block">${ICONS.books}</svg></div>
      <icon-cell name="copilot" size="36" style="width:40px;margin-left:17px"></icon-cell>
      <icon-cell name="folder" size="36" style="margin-left:29px"></icon-cell>
      <div class="app">${icon('palette', 36)}<span>Untitled - Paint</span><i></i></div>
      <div class="tray">
        <icon-cell name="chevup" size="18" style="width:48px"></icon-cell>
        <icon-cell name="mic" size="24" style="width:48px"></icon-cell>
        <icon-cell name="feedback" size="24" style="width:48px"></icon-cell>
        <icon-cell name="wifi" size="24" style="width:44px;margin-left:2px"></icon-cell>
        <icon-cell name="volume" size="24" style="width:28px"></icon-cell>
        <icon-cell name="battery" size="30" style="width:40px;margin-left:5px"></icon-cell>
        <span>100%</span>
        <div class="clock">5:42 PM<br>2/1/2025</div>
      </div>`;
  }
}

class AiItem extends HTMLElement {
  constructor() {
    super();
    const pad = this.getAttribute('pad');
    const gap = this.getAttribute('gap');
    this.attachShadow({ mode: 'open' }).innerHTML = `
      <style>
        :host { display: flex; align-items: center; height: 98px; padding-left: ${pad}px; }
        .text { margin-left: ${gap}px; }
        .t { font-size: 19.4px; font-weight: 600; line-height: 34px; color: #f6f6f6; }
        .s { font-size: 19.7px; line-height: 34px; color: #ececec; }
      </style>
      ${icon(this.getAttribute('icon'), 32)}
      <div class="text"><div class="t"><slot name="title"></slot></div><div class="s"><slot name="sub"></slot></div></div>`;
  }
}

class AiMenu extends HTMLElement {
  constructor() {
    super();
    this.attachShadow({ mode: 'open' }).innerHTML = `
      <style>
        :host { position: absolute; left: 1378px; top: 204px; box-sizing: border-box; width: 539px; height: 300px; padding-top: 5px; background: #2e302e; border-radius: 10px; box-shadow: 0 6px 18px rgba(0,0,0,.45); }
      </style>
      <slot></slot>`;
  }
}

// red marker arrows and the mouse pointer lie over everything
class ScreenMarks extends HTMLElement {
  constructor() {
    super();
    const arrow = d => `<path d="${d}" fill="none" stroke="#e5172d" stroke-width="6" stroke-linecap="round" stroke-linejoin="round"/>`;
    this.attachShadow({ mode: 'open' }).innerHTML = `
      <style>
        :host { position: absolute; left: 0; top: 0; width: 1920px; height: 1077px; pointer-events: none; }
        svg { display: block; }
      </style>
      <svg width="1920" height="1077" viewBox="0 0 1920 1077">
        ${arrow('M1592 41 1653 107M1654 78 1653 107 1621 105')}
        ${arrow('M1251 254H1387M1365 233 1387 254 1365 276')}
        ${arrow('M1254 353H1383M1361 330 1383 353 1361 373')}
        ${arrow('M1255 462H1380M1358 441 1380 462 1358 484')}
        <path d="M1690 14V39L1696 33 1701 41 1705 39 1701 31H1708Z" fill="#fff" stroke="#111" stroke-width="1"/>
      </svg>`;
  }
}

class PaintApp extends HTMLElement {
  constructor() {
    super();
    this.attachShadow({ mode: 'open' }).innerHTML = `
      <style>
        :host { display: block; position: relative; width: 1920px; height: 1077px; overflow: hidden; }
        .top { background: linear-gradient(90deg, #1a1b1a, #1a1b1a 60%, #1b211d); }
      </style>
      <div class="top"><title-bar></title-bar><menu-bar></menu-bar></div>
      <paint-ribbon></paint-ribbon>
      <canvas-stage></canvas-stage>
      <status-bar></status-bar>
      <task-bar></task-bar>
      <ai-menu>
        <ai-item icon="imgcreator" pad="24" gap="28"><span slot="title">Image Creator</span><span slot="sub">Create stunning images with just a few words</span></ai-item>
        <ai-item icon="generase" pad="23" gap="23"><span slot="title">Generative erase</span><span slot="sub">Remove objects with background fill</span></ai-item>
        <ai-item icon="removebgmenu" pad="23" gap="23"><span slot="title">Remove background</span><span slot="sub">Remove the background from your image</span></ai-item>
      </ai-menu>
      <screen-marks></screen-marks>`;
  }
}

customElements.define('icon-cell', IconCell);
customElements.define('title-bar', TitleBar);
customElements.define('menu-bar', MenuBar);
customElements.define('ribbon-group', RibbonGroup);
customElements.define('shape-gallery', ShapeGallery);
customElements.define('color-picker', ColorPicker);
customElements.define('paint-ribbon', PaintRibbon);
customElements.define('size-slider', SizeSlider);
customElements.define('canvas-stage', CanvasStage);
customElements.define('status-bar', StatusBar);
customElements.define('task-bar', TaskBar);
customElements.define('ai-item', AiItem);
customElements.define('ai-menu', AiMenu);
customElements.define('screen-marks', ScreenMarks);
customElements.define('paint-app', PaintApp);
</script>
</body>
</html>
